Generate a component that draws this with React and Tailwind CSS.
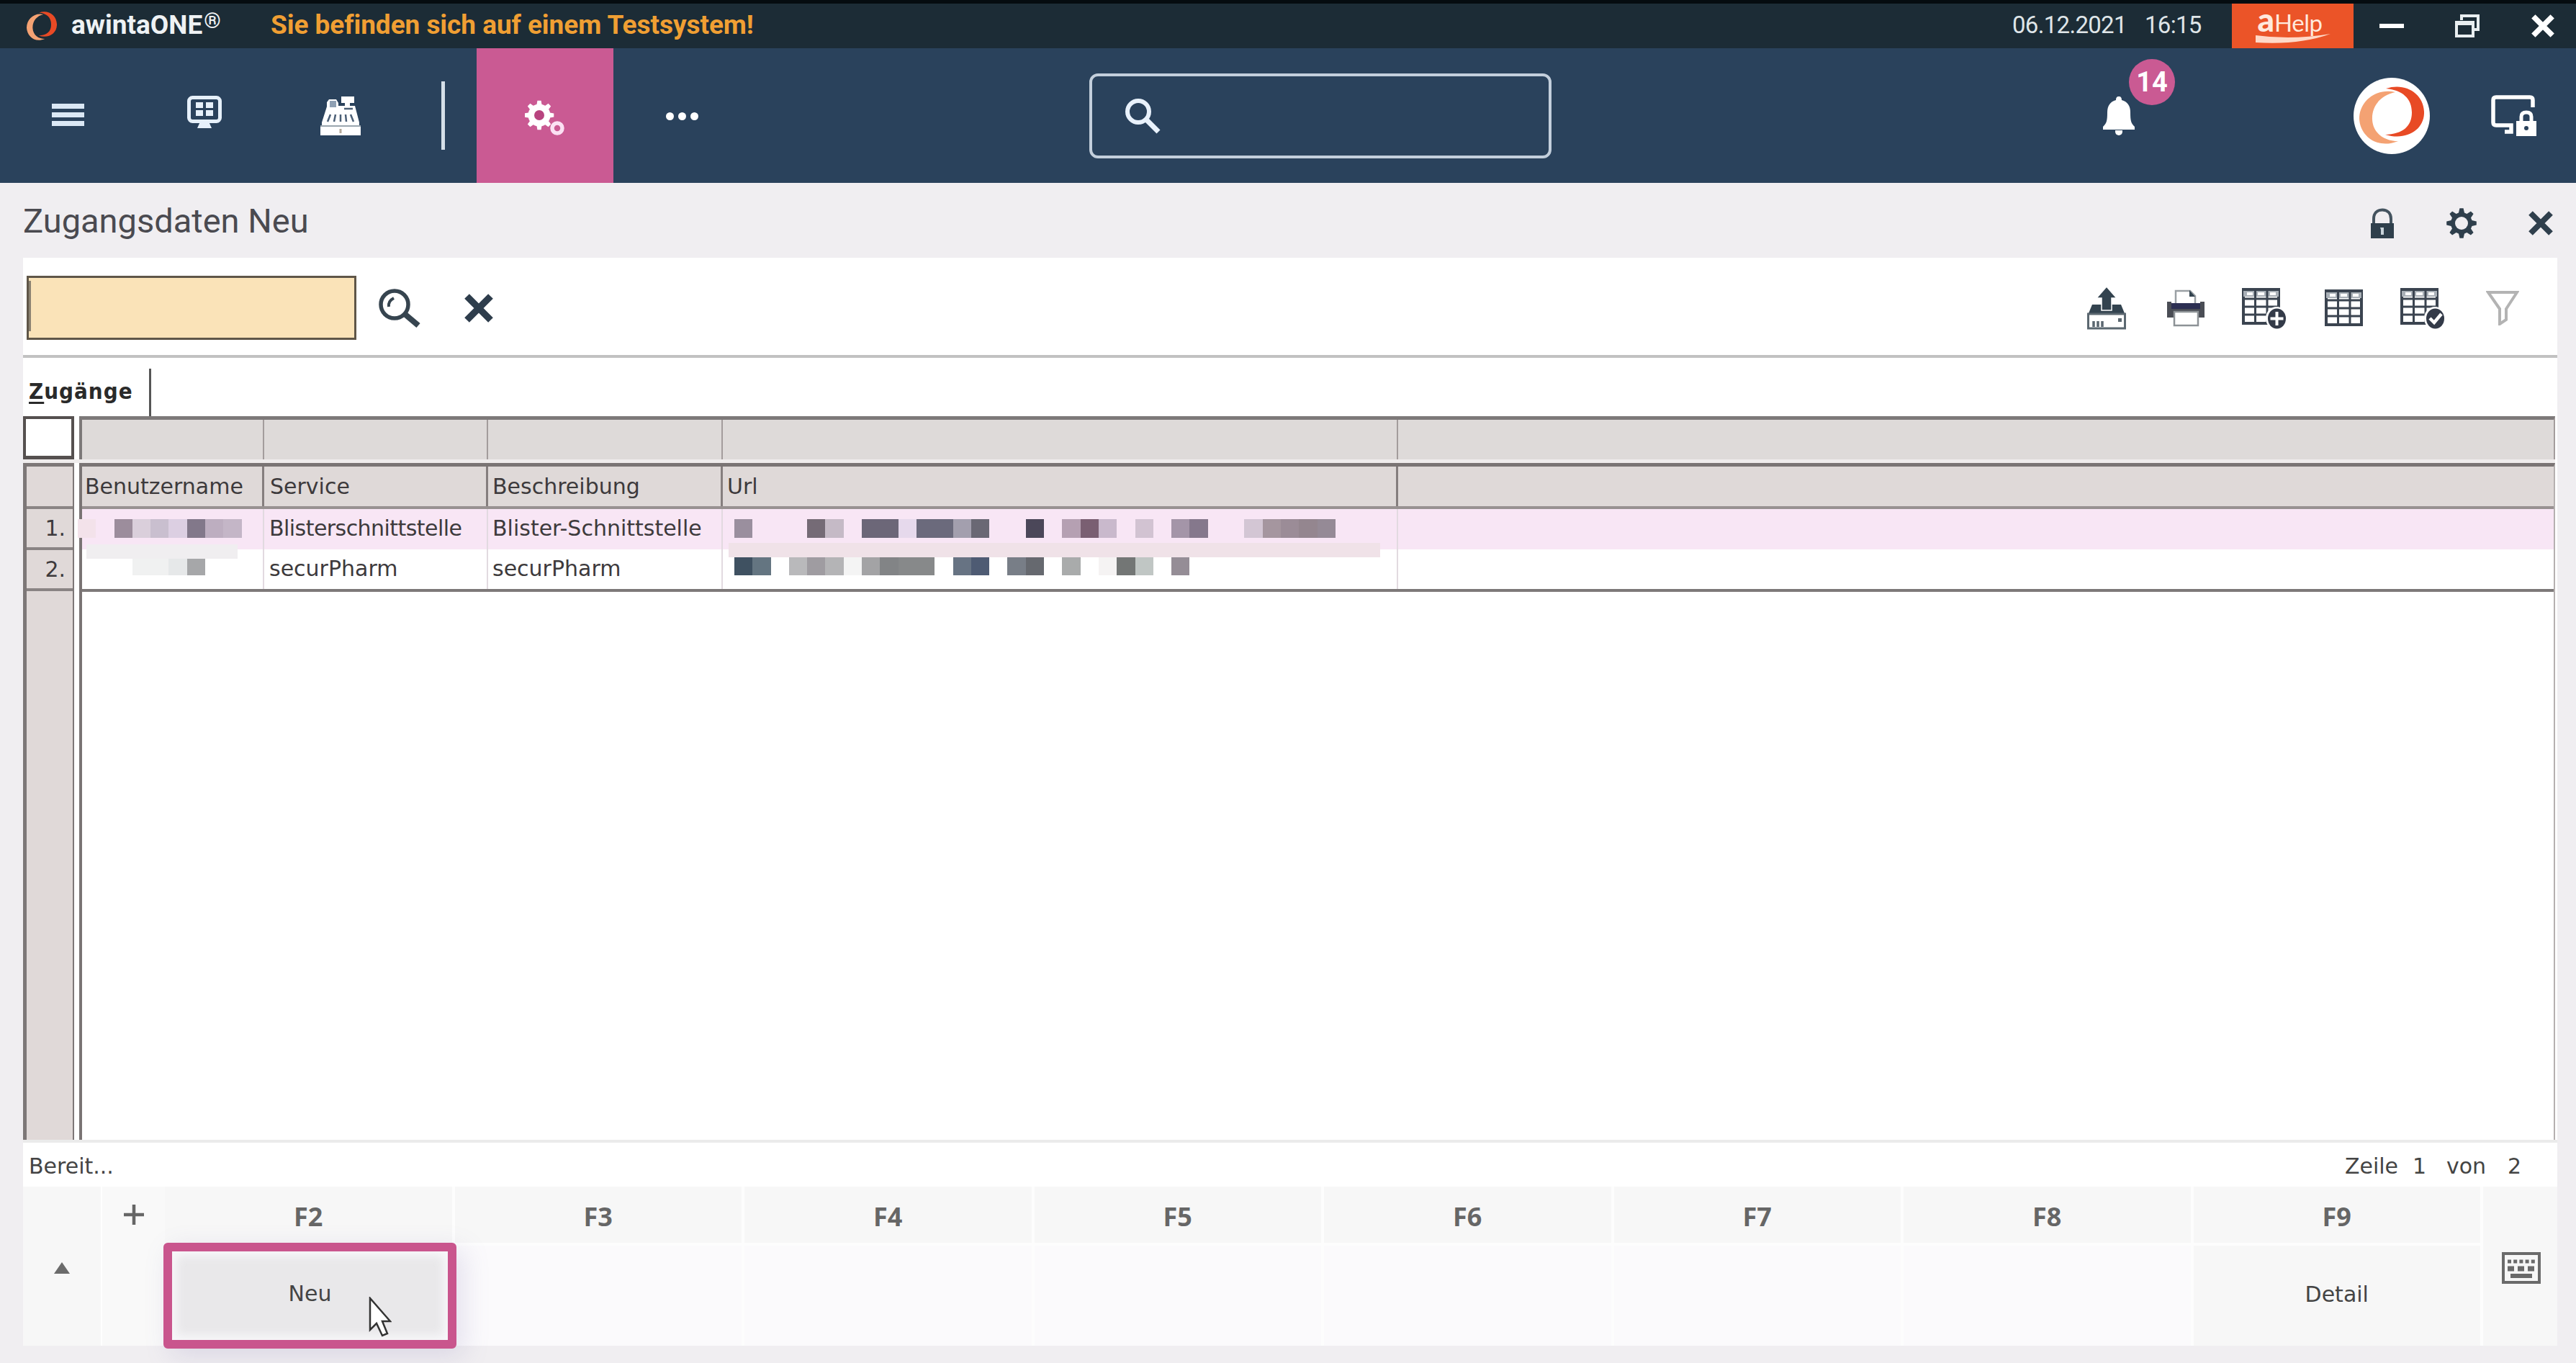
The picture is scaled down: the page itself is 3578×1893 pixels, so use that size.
import clsx from "clsx";

// ---------- DATA ----------

const COLUMNS = "grid grid-cols-[253px_311px_326px_938px_1fr]";

const ROWS = [
  { nr: "1.", service: "Blisterschnittstelle", text: "Blister-Schnittstelle", active: true },
  { nr: "2.", service: "securPharm", text: "securPharm", active: false },
];

// Pixelated (anonymised) values, one colour per block, null = empty block
const USER_MASK = [
  ["#f3e2ea", null, "#9c8d9c", "#dacfdb", "#c9bfcf", "#dccfe2", "#82788a", "#bdaec0", "#c4b6c7"],
  [null, null, null, "#f0f1f1", "#f0f1f1", "#e6e8e9", "#a6a7a9", null, null],
];

const URL_MASK = [
  [
    "#9a8f9e", null, null, null, "#756b76", "#c5bac6", null, "#6c6778", "#6c6778", "#e6d9ec",
    "#6b6a7c", "#6b6a7c", "#a39fae", "#6a6874", null, null, "#4b4759", null, "#b5a0b2", "#7a5f72",
    "#c9b9cc", null, "#d2c3d2", null, "#a495a8", "#85788c", null, null, "#d3c6d4", "#a5969f",
    "#9b8c97", "#94868f", "#958a96",
  ],
  [
    "#3f5161", "#647581", null, "#b9b9bb", "#9f9ca1", "#b4b4b6", "#f4f4f4", "#a3a3a5", "#828486", "#87898a",
    "#87898a", null, "#677383", "#4e5b73", null, "#787e87", "#66696f", null, "#a9abab", null,
    "#f5f3f3", "#737675", "#c0c6c4", null, "#958d96",
  ],
];

const KEYS = ["F2", "F3", "F4", "F5", "F6", "F7", "F8", "F9"];

// ---------- ICONS ----------

function gearPath(cx, cy, outer, inner, teeth) {
  const step = (Math.PI * 2) / teeth;
  let d = "";
  for (let i = 0; i < teeth; i++) {
    const a = i * step - Math.PI / 2;
    const pts = [
      [a - step * 0.34, inner],
      [a - step * 0.16, outer],
      [a + step * 0.16, outer],
      [a + step * 0.34, inner],
    ];
    pts.forEach(([t, r]) => {
      d += `${d ? "L" : "M"}${(cx + r * Math.cos(t)).toFixed(1)} ${(cy + r * Math.sin(t)).toFixed(1)}`;
    });
  }
  return d + "Z";
}

function Cross({ className }) {
  return (
    <svg viewBox="0 0 34 34" className={className} fill="none" stroke="currentColor" strokeWidth="8">
      <path d="M3 3L31 31M31 3L3 31" />
    </svg>
  );
}

function RingLogo({ className }) {
  return (
    <svg viewBox="0 0 90 82" className={className} preserveAspectRatio="none">
      <path d="M50 8C24 2 0 20 0 45C1 68 24 88 54 76C36 76 19 66 18 46C17 27 30 12 50 8Z" fill="#f4a273" />
      <path d="M37 3C64-6 89 10 90 35C91 60 66 76 36 67C60 66 73 56 73 36C73 17 60 5 37 3Z" fill="#e84a25" />
    </svg>
  );
}

function MonitorIcon() {
  return (
    <svg viewBox="0 0 48 46" className="h-[46px] w-12" fill="none">
      <rect x="2.500" y="2.500" width="43" height="33" rx="5" stroke="#e6f0fa" strokeWidth="5" />
      <path d="M12 9h10v8H12zM26 9h10v8H26zM12 20h10v8H12zM26 20h10v8H26zM18 36h12l4 9H14z" fill="#e6f0fa" />
    </svg>
  );
}

function RegisterIcon() {
  return (
    <svg viewBox="0 0 56 54" className="h-[54px] w-14">
      <path d="M29 0h18v9h-6v4h7l6 23v4H2v-4L9 14V8l3-4h10l3 5v4h9V9h-5z" fill="#fff" />
      <path d="M0 42h56v12H0z" fill="#fff" />
      <path d="M13 6h9v9h-9z" fill="#8fa0b3" />
      <path d="M33 17h12M14 25l-4 10M21 25l-2 10M28 25v10M35 25l1 10M42 25l4 10" stroke="#4b5f76" strokeWidth="2.500" fill="none" />
      <path d="M0 41h56" stroke="#9aa5ae" strokeWidth="2" />
      <path d="M28 45v6" stroke="#b4a99a" strokeWidth="3" />
    </svg>
  );
}

function GearsIcon() {
  return (
    <svg viewBox="0 0 56 50" className="h-[50px] w-14">
      <path d={gearPath(20, 21, 20.5, 14, 8)} fill="#fff" />
      <circle cx="20" cy="21" r="11" fill="none" stroke="#fff" strokeWidth="9" />
      <circle cx="20" cy="21" r="7" fill="#b8447f" />
      <circle cx="45" cy="39" r="7" fill="none" stroke="#fbe0f3" strokeWidth="5.500" />
    </svg>
  );
}

function BellIcon() {
  return (
    <svg viewBox="0 0 44 54" className="h-[54px] w-11" fill="#fff">
      <path d="M22 0c3 0 4 2 4 5c8 2 12 8 12 17c0 12 1 15 6 20v4H0v-4c5-5 6-8 6-20c0-9 4-15 12-17c0-3 1-5 4-5z" />
      <path d="M17 47h10v2a5 5 0 0 1-10 0z" />
    </svg>
  );
}

function MonitorLockIcon() {
  return (
    <svg viewBox="0 0 64 58" className="h-[58px] w-16" fill="none">
      <path d="M58 17V7q0-4-4-4H7Q3 3 3 7v31q0 4 4 4h21v9h-9" stroke="#fff" strokeWidth="5.500" />
      <path d="M35 36h28v21H35z" fill="#fff" />
      <path d="M42 37v-7q0-6 7-6t7 6v7" stroke="#fff" strokeWidth="5" />
      <circle cx="49" cy="46" r="3" fill="#2a425c" />
    </svg>
  );
}

function LockIcon() {
  return (
    <svg viewBox="0 0 32 42" className="h-[42px] w-8" fill="none">
      <path d="M4 22V15c0-8 5-12.500 12-12.500S28 7 28 15v7" stroke="#44535f" strokeWidth="4" />
      <path d="M0 21h32v21H0z" fill="#2f3f4c" />
      <path d="M13 27h5v10h-4v-7" fill="#c9d3da" />
    </svg>
  );
}

function GearIcon() {
  return (
    <svg viewBox="0 0 42 42" className="size-[42px]">
      <path d={gearPath(21, 21, 21, 15, 8)} fill="#2f3f4c" />
      <circle cx="21" cy="21" r="9" fill="#f0eef1" />
    </svg>
  );
}

function UploadIcon() {
  return (
    <svg viewBox="0 0 56 60" className="h-[60px] w-14" fill="none">
      <path d="M8 25h40l7 17H1z" fill="#33434f" />
      <path d="M2.500 38h51v20h-51z" fill="#fff" stroke="#5b6770" strokeWidth="3" />
      <path d="M28 0l14 16h-7v17H21V16h-7z" fill="#33434f" stroke="#fff" strokeWidth="1.500" />
      <path d="M10 48v8M16 48v8M22 48v8" stroke="#5b6770" strokeWidth="3.500" />
      <path d="M44 44h5v5h-5z" fill="#5b6770" />
    </svg>
  );
}

function PrinterIcon() {
  return (
    <svg viewBox="0 0 52 52" className="size-[52px]" fill="none">
      <path d="M12 20V2h20l7 7v11" fill="#fff" stroke="#9aa0a4" strokeWidth="2.500" />
      <path d="M31 1v9h8z" fill="#33434f" />
      <path d="M0 17h6v3h40v-3h6v22H0z" fill="#4a4d55" />
      <path d="M6 19h40v8H6z" fill="#2c2f52" />
      <path d="M10 31h33v19H10z" fill="#fff" stroke="#8d9296" strokeWidth="2.500" />
    </svg>
  );
}

function TableIcon({ badge }) {
  return (
    <svg viewBox="0 0 64 58" className="h-[58px] w-16" fill="none">
      <path d="M2 3h49v47H2z" fill="#fff" stroke="#3b4450" strokeWidth="4" />
      <path d="M2 5h49v8H2z" fill="#a9b0b7" />
      <path d="M0 3h53M2 16h49M2 27h49M2 38h49M18.500 3v47M35 3v47" stroke="#3b4450" strokeWidth="3" />
      <path d="M7 9h8M22 9h9M39 9h8" stroke="#fff" strokeWidth="4" />
      {badge && <ellipse cx="48" cy="43" rx="15" ry="16" fill="#fff" />}
      {badge && <ellipse cx="48.500" cy="43.500" rx="12.500" ry="14" fill="#333a48" />}
      {badge === "plus" && <path d="M48.500 34v19M39.500 43.500h18" stroke="#fff" strokeWidth="4" />}
      {badge === "check" && <path d="M41 43l6 6l10-12" stroke="#fff" strokeWidth="4.500" />}
    </svg>
  );
}

function FunnelIcon() {
  return (
    <svg viewBox="0 0 46 48" className="h-12 w-[46px]" fill="none">
      <path d="M3 2h40L28 25v15l-9 6V25z" stroke="#b3b3b3" strokeWidth="4" />
    </svg>
  );
}

function KeyboardIcon() {
  return (
    <svg viewBox="0 0 54 44" className="h-11 w-[54px]" fill="none" stroke="#6a6a6a">
      <path d="M2 2h50v40H2z" strokeWidth="4" />
      <path d="M8 13h38" strokeWidth="5" strokeDasharray="5 3.200" />
      <path d="M8 23h38" strokeWidth="7" strokeDasharray="9 5" />
      <path d="M12 33h30" strokeWidth="6" />
    </svg>
  );
}

// ---------- PARTS ----------

function Mask({ cells, className }) {
  return (
    <div className={clsx("flex", className)}>
      {cells.map((color, i) => (
        <div key={i} className="h-[26px] w-[25.3px] shrink-0" style={{ backgroundColor: color ?? "transparent" }} />
      ))}
    </div>
  );
}

function TitleBar() {
  return (
    <div className="flex h-[67px] items-center border-t-[5px] border-[#050c10] bg-[#1c2c36]">
      <RingLogo className="ml-[37px] h-[41px] w-[42px]" />
      <div className="ml-5 w-[277px] whitespace-nowrap pb-1 text-[37px] font-bold leading-none text-[#eef2f4]">
        awintaONE<span className="relative -top-2 ml-0.5 text-[30px] leading-none">®</span>
      </div>
      <div className="whitespace-nowrap pb-1 text-[37px] font-bold leading-none tracking-[-0.05px] text-[#f09f33]">
        Sie befinden sich auf einem Testsystem!
      </div>
      <div className="ml-auto flex items-center whitespace-pre pb-1 text-[33px] leading-none tracking-[-0.7px] text-[#dfe5e8]">
        <span className="w-[184px]">06.12.2021</span>
        <span className="w-[121px]">16:15</span>
      </div>
      <div className="flex h-[62px] w-[169px] flex-col items-center bg-[#eb5428] text-[#ffe9dd]">
        <div className="flex h-[42px] items-baseline pr-2 font-['Lato'] leading-[44px]">
          <span className="text-[46px] font-black leading-[44px]">a</span>
          <span className="text-[33px] leading-[44px] tracking-[-0.5px]">Help</span>
        </div>
        <svg viewBox="0 0 104 14" className="h-3.5 w-[104px]">
          <path d="M0 2Q50 9 104 0Q60 16 0 12Z" fill="#ffd9c8" />
        </svg>
      </div>
      <div className="-mr-1.5 flex text-white">
        <div className="flex w-[105px] items-center justify-center">
          <div className="h-1.5 w-[34px] bg-white" />
        </div>
        <div className="flex w-[105px] items-center justify-center">
          <svg viewBox="0 0 34 34" className="size-[34px]" fill="none" stroke="#e8eef0" strokeWidth="4">
            <path d="M9 9V3h23v19h-6" />
            <path d="M2 12h23v19H2zM2 14h23" />
          </svg>
        </div>
        <div className="flex w-[105px] items-center justify-center">
          <Cross className="size-8" />
        </div>
      </div>
    </div>
  );
}

function NavBar() {
  return (
    <div className="flex h-[187px] items-stretch bg-[#2a425c]">
      <div className="flex w-[189px] items-center justify-center pb-[3px]">
        <div className="flex w-[45px] flex-col gap-[5px]">
          <div className="h-[7px] bg-[#dbe8f5]" />
          <div className="h-[7px] bg-[#dbe8f5]" />
          <div className="h-[7px] bg-[#dbe8f5]" />
        </div>
      </div>
      <div className="flex w-[189px] items-center justify-center pb-2.5">
        <MonitorIcon />
      </div>
      <div className="flex w-[190px] items-center justify-center">
        <RegisterIcon />
      </div>
      <div className="flex w-[94px] items-center justify-center">
        <div className="h-[95px] w-[5px] bg-[#d5dfe8]" />
      </div>
      <div className="flex w-[190px] items-center justify-center bg-[#ca5a93] pt-1.5">
        <GearsIcon />
      </div>
      <div className="flex w-[190px] items-center justify-center gap-1.5 pt-0.5">
        <div className="size-[11px] rounded-full bg-white" />
        <div className="size-[11px] rounded-full bg-white" />
        <div className="size-[11px] rounded-full bg-white" />
      </div>

      <div className="ml-[471px] mt-[35px] flex h-[118px] w-[642px] items-center rounded-xl border-4 border-[#c3cfdc] pl-[45px]">
        <svg viewBox="0 0 50 50" className="size-[50px]" fill="none" stroke="#e9f2fc">
          <circle cx="19" cy="19" r="15" strokeWidth="6" />
          <path d="M29 29L47 47" strokeWidth="7" />
        </svg>
      </div>

      <div className="ml-auto flex items-center">
        <div className="relative mr-[304px]">
          <BellIcon />
          <div className="absolute -top-[52px] left-[36px] flex size-[64px] items-center justify-center rounded-full bg-[#ca5a93] pt-0.5 text-[38px] font-bold text-white">
            14
          </div>
        </div>
        <div className="mr-[85px] flex size-[106px] items-center justify-center rounded-full bg-white">
          <RingLogo className="h-[82px] w-[90px]" />
        </div>
        <div className="mr-[54px]">
          <MonitorLockIcon />
        </div>
      </div>
    </div>
  );
}

function Toolbar() {
  return (
    <div className="flex h-[139px] items-center border-b-4 border-[#c2c2c2] pt-1">
      <div className="ml-[5px] h-[89px] w-[458px] border-[3px] border-[#5f5648] bg-[#fae3b8] pt-1">
        <div className="h-[70px] w-[3px] bg-[#8b8271]" />
      </div>
      <svg viewBox="0 0 60 54" className="ml-[30px] h-[54px] w-[60px]" fill="none" stroke="#36444f">
        <circle cx="23" cy="22" r="19" strokeWidth="5.500" />
        <path d="M37 35L56 51" strokeWidth="8" />
        <path d="M15 25q-1-8 7-12" strokeWidth="4" />
      </svg>
      <Cross className="ml-[60px] size-[40px] text-[#2e3d4c]" />

      <div className="ml-auto mr-[21px] flex items-center">
        <div className="flex w-[110px] justify-center"><UploadIcon /></div>
        <div className="flex w-[110px] justify-center"><PrinterIcon /></div>
        <div className="flex w-[110px] justify-center"><TableIcon badge="plus" /></div>
        <div className="flex w-[110px] justify-center pl-2.5 pt-1"><TableIcon /></div>
        <div className="flex w-[110px] justify-center"><TableIcon badge="check" /></div>
        <div className="flex w-[110px] justify-center"><FunnelIcon /></div>
      </div>
    </div>
  );
}

function DataTable() {
  return (
    <div className="mr-[3px] flex h-[1005px] flex-col font-['DejaVu_Sans'] text-[30px] leading-none text-[#3d3a3c]">
      {/* Filter row */}
      <div className="flex h-[60px] shrink-0 gap-[7px]">
        <div className="w-[71px] border-4 border-b-[5px] border-[#55504f] bg-white" />
        <div className={clsx(COLUMNS, "flex-1 border-l-4 border-r-2 border-t-[5px] border-[#7d7979] border-r-[#a39c9c] bg-[#dedad9]")}>
          <div className="border-r-2 border-[#a39c9c]" />
          <div className="border-r-2 border-[#a39c9c]" />
          <div className="border-r-2 border-[#a39c9c]" />
          <div className="border-r-2 border-[#a39c9c]" />
        </div>
      </div>
      <div className="h-[5px] shrink-0 bg-[#efecec]" />

      <div className="flex flex-1 gap-[7px]">
        {/* Row numbers */}
        <div className="flex w-[71px] flex-col border-l-[5px] border-r-2 border-t-[5px] border-[#7d7777] bg-[#e0d9d8]">
          <div className="h-[59px] border-b-4 border-[#8a8484]" />
          {ROWS.map((row) => (
            <div key={row.nr} className="flex h-[57px] items-center justify-end border-b-4 border-[#8a8484] pr-2.5">
              {row.nr}
            </div>
          ))}
        </div>

        <div className="flex-1 border-l-4 border-r-2 border-t-[5px] border-[#7a7474] border-r-[#b5b0b0]">
          <div className={clsx(COLUMNS, "h-[59px] border-b-4 border-[#989191] bg-[#dfd9d8]")}>
            <div className="flex items-center border-r-[3px] border-[#857e7e] pl-1">Benutzername</div>
            <div className="flex items-center border-r-[3px] border-[#857e7e] pl-2">Service</div>
            <div className="flex items-center border-r-[3px] border-[#857e7e] pl-1.5">Beschreibung</div>
            <div className="flex items-center border-r-[3px] border-[#857e7e] pl-1.5">Url</div>
          </div>
          {ROWS.map((row, i) => (
            <div
              key={row.nr}
              className={clsx(COLUMNS, row.active ? "h-[56px] bg-[#f8e6f5]" : "h-[59px] border-b-4 border-[#7d7979] bg-white")}
            >
              <div className="relative border-r-2 border-[#e2dae0]">
                {row.active && <div className="absolute left-1.5 top-[49px] z-10 h-[20px] w-[210px] bg-[#f0eef0]" />}
                <Mask cells={USER_MASK[i]} className={row.active ? "-ml-1.5 mt-3.5" : "-ml-1.5 mt-2.5"} />
              </div>
              <div className={clsx("flex items-center border-r-2 border-[#e2dae0] pb-0.5 pl-[7px]", row.active && "tracking-[-0.55px]")}>
                {row.service}
              </div>
              <div className="flex items-center border-r-2 border-[#e2dae0] pb-0.5 pl-1.5">{row.text}</div>
              <div className="relative border-r-2 border-[#e2dae0]">
                {row.active && <div className="absolute left-2 top-[47px] z-10 h-[20px] w-[905px] bg-[#f0e2e8]" />}
                <Mask cells={URL_MASK[i]} className={row.active ? "ml-4 mt-3.5" : "ml-4 mt-2.5"} />
              </div>
            </div>
          ))}
        </div>
      </div>
    </div>
  );
}

function FunctionKeys() {
  return (
    <div className="flex h-[221px] bg-[#f7f7f7] font-['Noto_Sans']">
      <div className="flex w-[108px] items-center justify-center pt-1">
        <div className="h-0 w-0 border-x-[11px] border-b-[16px] border-x-transparent border-b-[#6b6b6b]" />
      </div>
      <div className="flex w-[89px] flex-col items-center border-l-2 border-white bg-[#f9f9f9] pt-[22px]">
        <svg viewBox="0 0 28 28" className="mt-[3px] size-7" stroke="#666" strokeWidth="4.500">
          <path d="M14 0v28M0 14h28" />
        </svg>
      </div>
      {KEYS.map((key) => (
        <div key={key} className="flex w-[402.500px] shrink-0 flex-col border-r-4 border-[#fdfdfd]">
          <div className="flex h-[78px] items-center justify-center pt-1.5 text-[36px] font-bold leading-none text-[#666]">
            {key}
          </div>
          <div
            className={clsx(
              "relative flex flex-1 items-center justify-center border-t-4 border-[#fdfdfd] font-['DejaVu_Sans'] text-[30px] leading-none text-[#444]",
              key === "F9" ? "bg-[#f7f7f7]" : "bg-[#fbfafc]"
            )}
          >
            {key === "F9" && <span className="pb-1">Detail</span>}
            {key === "F2" && (
              <button className="absolute -left-0.5 -top-1 z-10 flex h-[147px] w-[407px] items-center justify-center rounded-md border-[12px] border-[#c9558d] bg-[#e9e8ea] pb-1.5 shadow-[10px_10px_36px_rgba(120,110,170,0.18),inset_0_0_14px_6px_rgba(250,250,252,0.9)]">
                Neu
                <svg viewBox="0 0 32 56" className="absolute left-[273px] top-[63px] h-14 w-8">
                  <path d="M2 2V46L11 37L19 54L26 51L19 34H30Z" fill="#fff" stroke="#333" strokeWidth="2.500" />
                </svg>
              </button>
            )}
          </div>
        </div>
      ))}
      <div className="flex flex-1 items-center justify-center pl-0.5 pt-1">
        <KeyboardIcon />
      </div>
    </div>
  );
}

// ---------- PAGE ----------

export default function App() {
  return (
    <div className="flex h-[1893px] w-[3578px] flex-col overflow-hidden bg-[#f0eef1] font-['Roboto',sans-serif]">
      <TitleBar />
      <NavBar />

      <div className="flex h-[104px] items-center">
        <h1 className="ml-8 text-[47px] leading-none text-[#4a4a50]">Zugangsdaten Neu</h1>
        <div className="-mr-1.5 ml-auto flex items-center pt-2">
          <div className="flex w-[110px] justify-center"><LockIcon /></div>
          <div className="flex w-[110px] justify-center"><GearIcon /></div>
          <div className="flex w-[110px] items-center justify-center">
            <Cross className="size-[34px] text-[#2f3f4c]" />
          </div>
        </div>
      </div>

      <div className="ml-8 mr-[26px] flex h-[1511px] flex-col bg-white">
        <Toolbar />
        <div className="flex h-[81px] items-end">
          <div className="flex h-[66px] w-[178px] items-center border-r-[3px] border-[#555] pb-1 pl-2 font-['DejaVu_Sans_Condensed','DejaVu_Sans'] text-[31px] font-bold leading-none tracking-[1px] text-[#2a2a2a]">
            <span className="underline underline-offset-4">Z</span>ugänge
          </div>
        </div>
        <DataTable />
        <div className="flex h-[65px] items-center border-t-4 border-[#ebebeb] pt-1 font-['DejaVu_Sans'] text-[30px] leading-none text-[#444]">
          <div className="ml-2">Bereit...</div>
          <div className="ml-auto mr-[50px] flex">
            <span className="w-[94px]">Zeile</span>
            <span className="w-[47px]">1</span>
            <span className="w-[85px]">von</span>
            <span>2</span>
          </div>
        </div>
        <FunctionKeys />
      </div>
    </div>
  );
}
